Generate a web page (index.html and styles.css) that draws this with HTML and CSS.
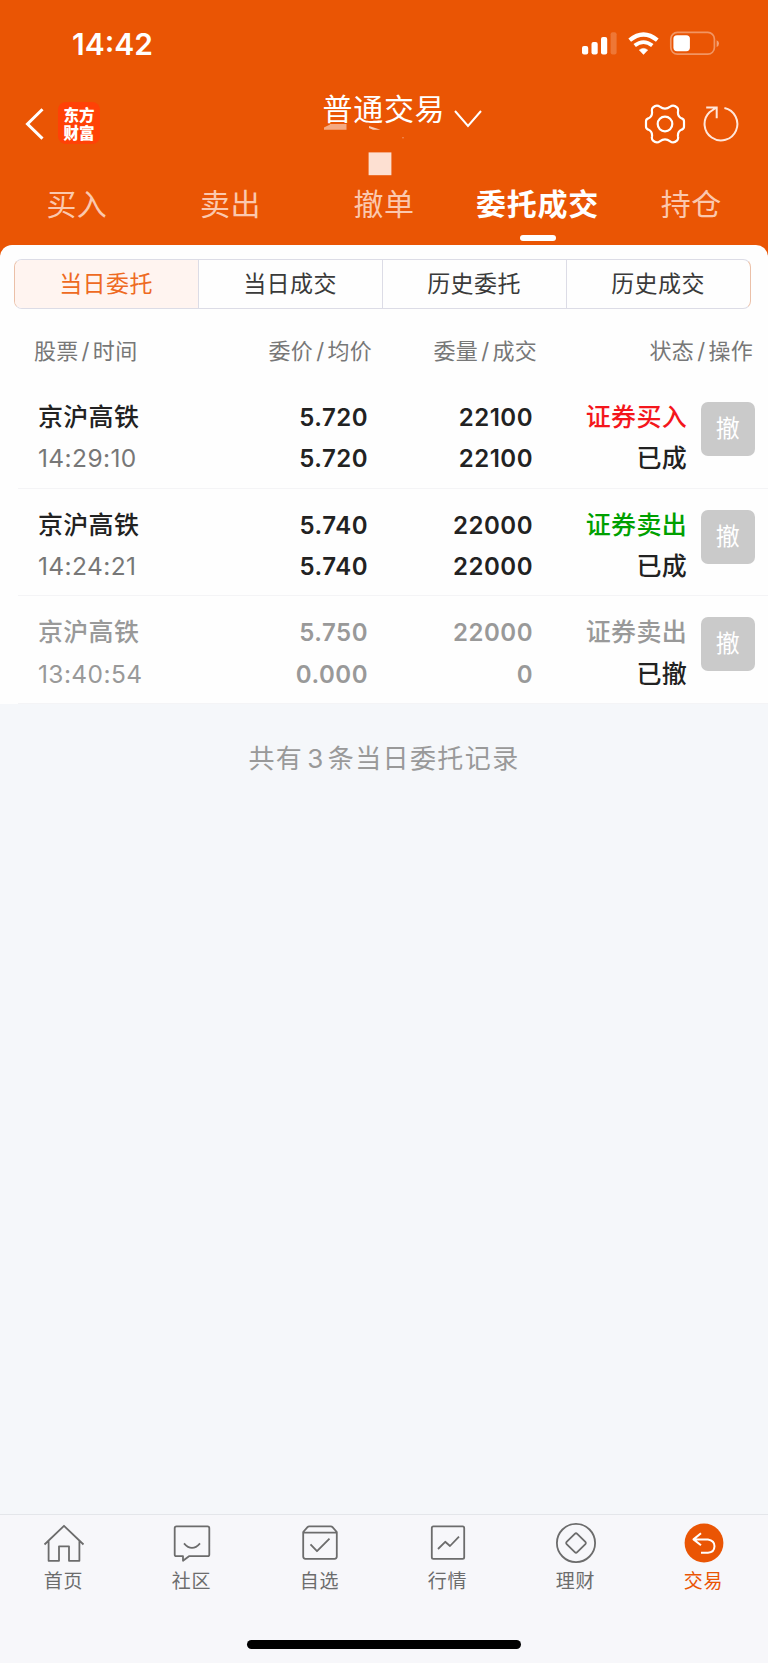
FILE: index.html
```html
<!doctype html>
<html lang="zh-CN">
<head>
	<meta charset="utf-8">
	<title>委托成交</title>
	<link rel="stylesheet" href="styles.css">
</head>
<body>

<div class="header">

	<div class="statusbar">
		<div class="clock">14:42</div>
		<svg class="signals" width="140" height="26" viewBox="0 0 140 26">
			<g fill="#fff">
				<rect x="0" y="15" width="6.2" height="8.6" rx="2"/>
				<rect x="9.5" y="11" width="6.2" height="12.6" rx="2"/>
				<rect x="19" y="6" width="6.2" height="17.6" rx="2"/>
				<rect x="28.6" y="1.3" width="6" height="22.3" rx="2" opacity=".2"/>
				<path d="M61.5 23.4l-4.2-4.4q4.2-3.2 8.4 0z" stroke="#fff" stroke-width=".6"/>
				<rect x="91.4" y="4.2" width="16.5" height="16" rx="3.6"/>
				<path d="M134.6 9.2q2.4 1 2.4 3.4t-2.4 3.4z" opacity=".45"/>
			</g>
			<g fill="none" stroke="#fff">
				<path d="M47.7 9.2q13.8-11.4 27.6 0" stroke-width="4.2"/>
				<path d="M52.7 14.6q8.8-7 17.6 0" stroke-width="3.8"/>
				<rect x="88.8" y="1.4" width="43.6" height="21.8" rx="6.6" stroke-width="1.7" opacity=".38"/>
			</g>
		</svg>
	</div>

	<div class="titlebar">
		<div class="left">
			<svg width="20" height="34" viewBox="0 0 20 34"><path d="M17.5 2.2L2.5 17l15 14.6" fill="none" stroke="#fff" stroke-width="3"/></svg>
			<div class="logo"><div>东方</div><div>财富</div></div>
		</div>
		<div class="title">
			<span>普通交易</span>
			<svg width="30" height="20" viewBox="0 0 30 20"><path d="M2 2l13 15L28 2" fill="none" stroke="#fff" stroke-width="2"/></svg>
			<svg class="marks" width="90" height="54" viewBox="0 0 90 54">
				<path d="M0 6.8V4.6Q3 3 6 1.6V1h16.5v5.8z" fill="#fff" opacity=".5"/>
				<path d="M45 3l11.5 3.8H49L45 5z" fill="#fff" opacity=".7"/>
				<rect x="78" y="14" width="2" height="1.4" fill="#fff" opacity=".25"/>
				<rect x="44.6" y="29.4" width="22.8" height="22.8" fill="#fde0d2"/>
			</svg>
		</div>
		<div class="right">
			<svg width="42" height="42" viewBox="-21 -21 42 42">
				<g fill="none" stroke="#fff" stroke-width="2.2" stroke-linejoin="round">
					<path d="M-12.2 -16.4Q-8.5 -20 -5.2 -17.3Q0 -13.4 5.2 -17.3Q8.5 -20 12.2 -16.4Q13.5 -15 13 -12.4Q12.4 -7.5 16.8 -5.6Q19 -4.8 19 -2.5V2.5Q19 4.8 16.8 5.6Q12.4 7.5 13 12.4Q13.5 15 12.2 16.4Q8.5 20 5.2 17.3Q0 13.4 -5.2 17.3Q-8.5 20 -12.2 16.4Q-13.5 15 -13 12.4Q-12.4 7.5 -16.8 5.6Q-19 4.8 -19 2.5V-2.5Q-19 -4.8 -16.8 -5.6Q-12.4 -7.5 -13 -12.4Q-13.5 -15 -12.2 -16.4z"/>
					<circle r="7.3"/>
				</g>
			</svg>
			<svg width="38" height="38" viewBox="-19 -19 38 38">
				<path d="M3.4 -16A16.4 16.4 0 1 1 -11.5 -11.7L-5 -16.2M-14.8 -16.4H-4.3V-5.8" fill="none" stroke="#ffe6da" stroke-width="2"/>
			</svg>
		</div>
	</div>

	<div class="tabs">
		<div class="tab">买入</div>
		<div class="tab">卖出</div>
		<div class="tab">撤单</div>
		<div class="tab active">委托成交</div>
		<div class="tab">持仓</div>
	</div>

</div>

<div class="sheet">

	<div class="segments">
		<div class="segment selected">当日委托</div>
		<div class="segment">当日成交</div>
		<div class="segment">历史委托</div>
		<div class="segment">历史成交</div>
	</div>

	<div class="columns">
		<div>股票<i>/</i>时间</div>
		<div>委价<i>/</i>均价</div>
		<div>委量<i>/</i>成交</div>
		<div>状态<i>/</i>操作</div>
	</div>

	<div class="order">
		<div class="name">京沪高铁<br><span class="time">14:29:10</span></div>
		<div class="num">5.720<br>5.720</div>
		<div class="num">22100<br>22100</div>
		<div class="state"><span class="buy">证券买入</span><br>已成</div>
		<div class="cancel">撤</div>
	</div>

	<div class="order">
		<div class="name">京沪高铁<br><span class="time">14:24:21</span></div>
		<div class="num">5.740<br>5.740</div>
		<div class="num">22000<br>22000</div>
		<div class="state"><span class="sell">证券卖出</span><br>已成</div>
		<div class="cancel">撤</div>
	</div>

	<div class="order cancelled">
		<div class="name">京沪高铁<br><span class="time">13:40:54</span></div>
		<div class="num">5.750<br>0.000</div>
		<div class="num">22000<br>0</div>
		<div class="state"><span class="sell">证券卖出</span><br>已撤</div>
		<div class="cancel">撤</div>
	</div>

</div>

<div class="summary">共有<b>3</b>条当日委托记录</div>

<div class="navbar">
	<div class="nav">
		<svg width="44" height="44" viewBox="-22 -22 44 44"><path d="M-19.5 1.5L0 -17.2L19.5 1.5M-15.4 -1.8V17.8H-5V3.3H5V17.8H15.4V-1.8"/></svg>
		首页
	</div>
	<div class="nav">
		<svg width="44" height="44" viewBox="-22 -22 44 44"><path d="M-15.5 -16.6H15.5Q17.3 -16.6 17.3 -14.8V11.4Q17.3 13.2 15.5 13.2H-3L-9 17.8V13.2H-15.5Q-17.3 13.2 -17.3 11.4V-14.8Q-17.3 -16.6 -15.5 -16.6zM-8 0.3Q0 9.5 8 0.3"/></svg>
		社区
	</div>
	<div class="nav">
		<svg width="44" height="44" viewBox="-22 -22 44 44"><path d="M-16.8 -11L-12.5 -15.8Q-11.8 -16.6 -10.8 -16.6H10.8Q11.8 -16.6 12.5 -15.8L16.8 -11V13.6Q16.8 15.8 14.6 15.8H-14.6Q-16.8 15.8 -16.8 13.6zM-16.8 -10.4H16.8M-9.5 1.4L-3 8.2L9.5 -4.4"/></svg>
		自选
	</div>
	<div class="nav">
		<svg width="44" height="44" viewBox="-22 -22 44 44"><path d="M-14.6 -16.6H14.6Q16.2 -16.6 16.2 -15V14.2Q16.2 15.8 14.6 15.8H-14.6Q-16.2 15.8 -16.2 14.2V-15Q-16.2 -16.6 -14.6 -16.6zM-10 6L-2.8 -1.2L2 3L11 -6.4"/></svg>
		行情
	</div>
	<div class="nav">
		<svg width="44" height="44" viewBox="-22 -22 44 44"><circle r="19.1"/><path d="M-1.2 -9.2Q0 -10.4 1.2 -9.2L9.4 -1.2Q10.4 0 9.4 1.2L1.2 9.2Q0 10.4 -1.2 9.2L-9.4 1.2Q-10.4 0 -9.4 -1.2z"/></svg>
		理财
	</div>
	<div class="nav current">
		<svg width="44" height="44" viewBox="-22 -22 44 44"><circle r="19.4"/><path d="M-3 -9.7L-10.5 -3.6L-3 2.3M-10.5 -3.6H4Q10.5 -2.6 10.5 3.2Q10.3 9.4 4 9.7H-3"/></svg>
		交易
	</div>
</div>
<div class="home"></div>

</body>
</html>
```

FILE: styles.css
```css
* { box-sizing: border-box; }
body { margin: 0; height: 1663px; display: flex; flex-direction: column; background: #f5f7fa; color: #222; font-family: Inter, "Noto Sans CJK SC", sans-serif; }
svg { display: block; flex: none; }

.header { height: 258px; flex: none; background: #ea5504; color: #fff; }
.statusbar { height: 88px; padding: 0 49px 0 72px; display: flex; justify-content: space-between; }
.clock { font-size: 30px; font-weight: 600; line-height: 88px; }
.signals { margin-top: 31px; margin-right: -3px; }

.titlebar { height: 74px; display: grid; grid-template-columns: 322.5px 1fr 124px; }
.left { display: flex; padding: 17px 0 0 25px; }
.left svg { margin-top: 2px; }
.logo { width: 42px; height: 42px; margin: -3px 0 0 13px; padding-top: 4px; border-radius: 8px; background: #ff4106; font: 900 15.5px/17.5px "Noto Sans CJK SC", sans-serif; text-align: center; }
.title { position: relative; display: flex; font-size: 30px; line-height: 43px; letter-spacing: 0.7px; }
.title svg { margin: 21px 0 0 8px; }
.title .marks { position: absolute; left: 1px; top: 35px; margin: 0; }
.right { display: flex; padding-top: 15px; }
.right svg + svg { margin: 2px 0 0 16px; }

.tabs { display: flex; }
.tab { flex: 1; height: 80px; display: flex; flex-direction: column; align-items: center; font-size: 30px; line-height: 84px; letter-spacing: 0.4px; color: #fbc8ae; }
.active { font-weight: 700; letter-spacing: 0.8px; color: #fff; }
.active:after { content: ""; width: 36px; height: 6px; margin-top: -11px; border-radius: 3px; background: #fff; flex: none; }

.sheet { margin-top: -13.5px; padding-top: 14.5px; border-radius: 12px 12px 0 0; background: #fefefe; }
.segments { display: flex; height: 50px; margin: 0 17px 0 14px; border: 1px solid #dcdce6; border-left-color: #ebc0a8; border-right-color: #ebc0a8; border-radius: 8px; overflow: hidden; }
.segment { flex: 1; font-size: 23px; line-height: 49px; letter-spacing: 0.4px; text-align: center; text-indent: -1px; color: #3a3a3a; }
.segment + .segment { border-left: 1px solid #dcdce6; }
.selected { background: #fff4f0; color: #ee6a22; }

.columns, .order { display: grid; grid-template-columns: 199px 139px 165px 1fr; }
.columns { height: 72px; padding: 0 15px 0 34px; font-size: 22px; line-height: 84px; letter-spacing: 0.3px; color: #777; text-align: right; }
.columns div:first-child { text-align: left; }
.columns i { font-style: normal; margin: 0 3px; }

.order { grid-template-columns: 191px 139px 165px 154px 1fr; height: 107.7px; padding: 16px 13px 0 38px; font-size: 24px; line-height: 41.3px; font-weight: 600; letter-spacing: 0.5px; text-align: right; background: linear-gradient(#f4f4f6, #f4f4f6) 18px 100% / 100% 1px no-repeat; }
.name { text-align: left; }
.name, .state { font-size: 25px; font-weight: 500; letter-spacing: 0.3px; }
.time { font-size: 24.5px; font-weight: 400; letter-spacing: 0.4px; color: #777; }
.buy { color: #f4161c; }
.sell { color: #00a000; }
.cancelled .name, .cancelled .time, .cancelled .num, .cancelled .sell { color: #999; }
.cancel { width: 54px; height: 54px; margin: 5px 0 0 auto; border-radius: 7px; background: #cacaca; color: #fff; font-weight: 400; line-height: 54px; text-align: center; }

.summary { padding-top: 35px; font-size: 26px; line-height: 40px; letter-spacing: 1.4px; color: #999; text-align: center; }
.summary b { font-weight: 400; margin: 0 3px 0 4px; }

.navbar { margin-top: auto; height: 126px; flex: none; display: flex; border-top: 1px solid #e4e6ea; background: #f7f7fa; }
.nav { flex: 1; display: flex; flex-direction: column; align-items: center; padding: 6px 1px 0 0; font-size: 19px; line-height: 33px; letter-spacing: 0.7px; color: #6c6c6c; }
.nav svg { fill: none; stroke: #6c6c6c; stroke-width: 1.8; stroke-linejoin: round; }
.current { color: #ea5504; }
.current circle { fill: #ea5504; stroke: none; }
.current path { stroke: #fff; stroke-width: 2; }
.home { flex: none; height: 23px; background: #f7f7fa; }
.home:after { content: ""; display: block; width: 274px; height: 9px; margin: 0 auto; border-radius: 5px; background: #000; }
```
